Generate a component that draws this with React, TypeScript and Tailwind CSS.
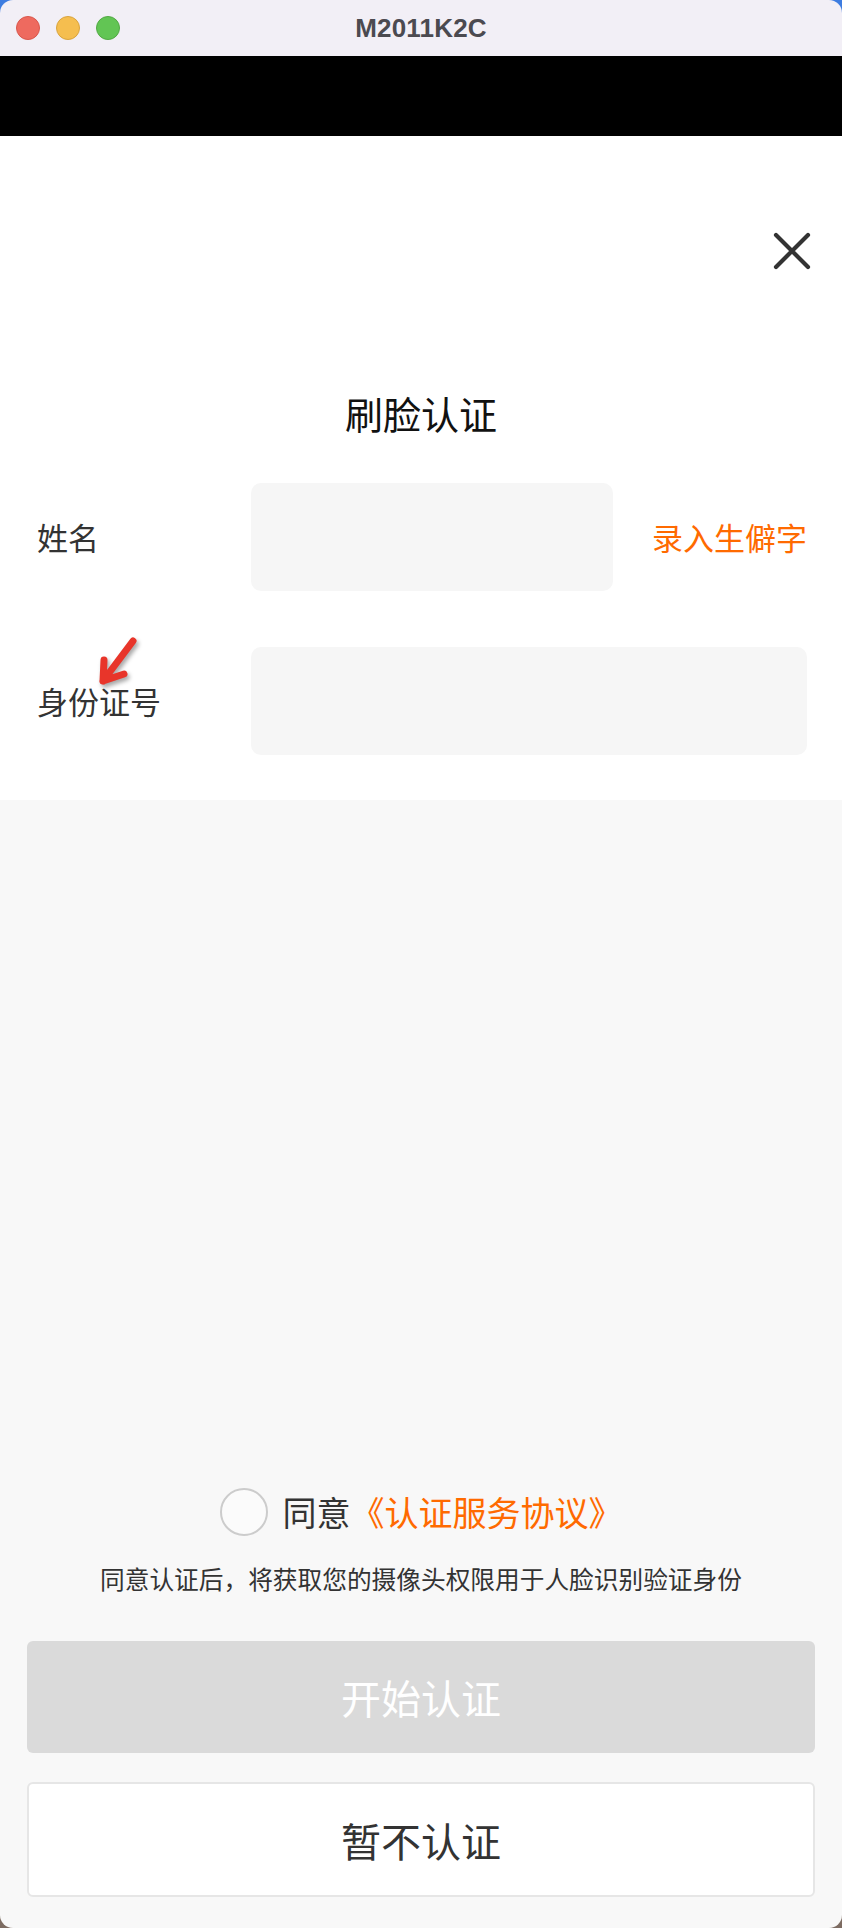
const cjk = "font-['Noto_Sans_CJK_SC','Noto_Sans',sans-serif]";

function CloseIcon() {
  return (
    <svg width="38" height="38" viewBox="0 0 38 38" fill="none">
      <path d="M3 3L35 35M35 3L3 35" stroke="#333" strokeWidth="4.2" strokeLinecap="round" />
    </svg>
  );
}

function RedArrow() {
  return (
    <svg
      width="45"
      height="55"
      viewBox="0 0 45 55"
      fill="none"
      className="absolute left-[58px] top-[-44px] drop-shadow-[2px_3px_2px_rgba(0,0,0,0.35)]"
    >
      <path
        d="M38 7L8 47M8 47L9 26M8 47L29 40"
        stroke="#e8352a"
        strokeWidth="7"
        strokeLinecap="round"
        strokeLinejoin="round"
      />
    </svg>
  );
}

export default function App() {
  return (
    <div className="w-[842px] h-[1928px] bg-[linear-gradient(#3d7ce0_50%,#7d6c62_50%)]">
      <div className={`h-full rounded-[13px] overflow-hidden flex flex-col ${cjk}`}>
        {/* title bar */}
        <div className="h-[56px] bg-[#f2eff6] grid grid-cols-[1fr_auto_1fr] items-center">
          <div className="flex items-center gap-[16px] pl-[16px]">
            <span className="w-[24px] h-[24px] rounded-full bg-[#ee6a5f] border border-[#d9574c]" />
            <span className="w-[24px] h-[24px] rounded-full bg-[#f5be4f] border border-[#d9a43e]" />
            <span className="w-[24px] h-[24px] rounded-full bg-[#62c554] border border-[#52a944]" />
          </div>
          <div className="font-['Liberation_Sans',sans-serif] font-bold text-[26px] text-[#4b4a50] tracking-[0.2px]">
            M2011K2C
          </div>
          <div />
        </div>
        <div className="h-[80px] bg-black" />

        {/* white form section */}
        <div className="bg-white pt-[96px] pb-[45px]">
          <div className="flex justify-end pr-[31px]">
            <CloseIcon />
          </div>
          <h1 className="mt-[121px] text-center text-[38px] leading-[44px] text-[#111]">刷脸认证</h1>

          <div className="mt-[48px] pl-[37px] pr-[35px] flex flex-col gap-[56px]">
            <div className="grid grid-cols-[214px_1fr] items-center">
              <span className="text-[31px] text-[#333]">姓名</span>
              <div className="flex items-center justify-between">
                <div className="w-[362px] h-[108px] rounded-[10px] bg-[#f6f6f6]" />
                <span className="text-[31px] text-[#ff6a00]">录入生僻字</span>
              </div>
            </div>
            <div className="grid grid-cols-[214px_1fr] items-center">
              <span className="relative text-[31px] text-[#333]">
                身份证号
                <RedArrow />
              </span>
              <div className="h-[108px] rounded-[10px] bg-[#f6f6f6]" />
            </div>
          </div>
        </div>

        {/* gray bottom section */}
        <div className="flex-1 bg-[#f8f8f8] flex flex-col justify-end px-[27px] pb-[31px]">
          <div className="flex items-center justify-center">
            <span className="w-[48px] h-[48px] rounded-full border-2 border-[#cccccc] bg-white/40" />
            <span className="ml-[15px] text-[34px] text-[#333]">同意</span>
            <span className="text-[34px] text-[#ff6a00]">《认证服务协议》</span>
          </div>
          <p className="mt-[23px] text-center text-[24.7px] leading-[36px] text-[#333]">
            同意认证后，将获取您的摄像头权限用于人脸识别验证身份
          </p>
          <button className="mt-[45px] h-[112px] rounded-[6px] bg-[#dadada] text-white text-[40px]">
            开始认证
          </button>
          <button className="mt-[29px] h-[115px] rounded-[6px] bg-white border-2 border-[#e6e6e6] text-[#333] text-[40px]">
            暂不认证
          </button>
        </div>
      </div>
    </div>
  );
}
